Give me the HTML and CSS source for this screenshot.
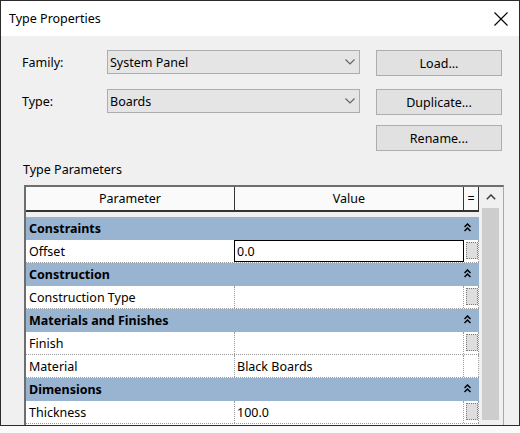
FILE: index.html
```html
<!DOCTYPE html>
<html>
<head>
<meta charset="utf-8">
<link rel="stylesheet" href="styles.css">
</head>
<body>
<div class="dialog">
  <div class="titlebar">
    <span class="title">Type Properties</span>
    <svg class="close" width="14" height="14" viewBox="0 0 14 14"><path d="M0.5 0.5 L13.5 13.5 M13.5 0.5 L0.5 13.5" stroke="#000" stroke-width="1.1" fill="none"/></svg>
  </div>
  <div class="body">
    <div class="top">
      <div class="fields">
        <div class="label">Family:</div>
        <div class="combo"><span>System Panel</span><svg class="chev" width="10" height="6" viewBox="0 0 10 6"><path d="M0.5 0.5 L5 5 L9.5 0.5" stroke="#606060" stroke-width="1.1" fill="none"/></svg></div>
        <div class="label">Type:</div>
        <div class="combo"><span>Boards</span><svg class="chev" width="10" height="6" viewBox="0 0 10 6"><path d="M0.5 0.5 L5 5 L9.5 0.5" stroke="#606060" stroke-width="1.1" fill="none"/></svg></div>
      </div>
      <div class="buttons">
        <div class="btn">Load...</div>
        <div class="btn btn-dup">Duplicate...</div>
        <div class="btn btn-ren">Rename...</div>
      </div>
    </div>
    <div class="section-label">Type Parameters</div>
    <div class="grid">
      <div class="table">
        <div class="hdr">
          <div class="c1">Parameter</div>
          <div class="c2">Value</div>
          <div class="c3">=</div>
        </div>
        <div class="gap"></div>
        <div class="band"><span>Constraints</span><svg class="dchev" width="7" height="9" viewBox="0 0 7 9"><path d="M0.5 4 L3.5 1 L6.5 4 M0.5 8 L3.5 5 L6.5 8" stroke="#000" stroke-width="1.5" fill="none"/></svg></div>
        <div class="row"><div class="name">Offset</div><div class="val edit">0.0</div><div class="eq"><div class="eqbtn"></div></div></div>
        <div class="band"><span>Construction</span><svg class="dchev" width="7" height="9" viewBox="0 0 7 9"><path d="M0.5 4 L3.5 1 L6.5 4 M0.5 8 L3.5 5 L6.5 8" stroke="#000" stroke-width="1.5" fill="none"/></svg></div>
        <div class="row"><div class="name">Construction Type</div><div class="val"></div><div class="eq"><div class="eqbtn"></div></div></div>
        <div class="band"><span>Materials and Finishes</span><svg class="dchev" width="7" height="9" viewBox="0 0 7 9"><path d="M0.5 4 L3.5 1 L6.5 4 M0.5 8 L3.5 5 L6.5 8" stroke="#000" stroke-width="1.5" fill="none"/></svg></div>
        <div class="row"><div class="name">Finish</div><div class="val"></div><div class="eq"><div class="eqbtn"></div></div></div>
        <div class="row"><div class="name">Material</div><div class="val">Black Boards</div><div class="eq"></div></div>
        <div class="band"><span>Dimensions</span><svg class="dchev" width="7" height="9" viewBox="0 0 7 9"><path d="M0.5 4 L3.5 1 L6.5 4 M0.5 8 L3.5 5 L6.5 8" stroke="#000" stroke-width="1.5" fill="none"/></svg></div>
        <div class="row"><div class="name">Thickness</div><div class="val">100.0</div><div class="eq"><div class="eqbtn"></div></div></div>
      </div>
      <div class="sb">
        <div class="sb-arrow"><svg width="10" height="6" viewBox="0 0 10 6"><path d="M0.8 5.2 L5 1 L9.2 5.2" stroke="#444" stroke-width="1.6" fill="none"/></svg></div>
        <div class="sb-thumb"></div>
      </div>
    </div>
  </div>
</div>
</body>
</html>
```
FILE: styles.css
```css
* { box-sizing: border-box; }
body {
  margin: 0;
  background: #fafafa;
  font-family: "Noto Sans", "Open Sans", sans-serif;
  font-size: 12.5px;
  color: #000;
}
.dialog {
  width: 520px;
  height: 426px;
  border: 1px solid #2b2b2b;
  background: #f0f0f0;
  display: flex;
  flex-direction: column;
  overflow: hidden;
}
.titlebar {
  height: 35px;
  flex-shrink: 0;
  background: #fff;
  display: flex;
  align-items: center;
  justify-content: space-between;
  padding: 0 11px 0 8px;
}
.close { display: block; }
.body {
  flex: 1;
  min-height: 0;
  padding-top: 14px;
  display: flex;
  flex-direction: column;
  overflow: hidden;
}
.top { display: flex; flex-shrink: 0; }
.fields {
  margin-left: 21px;
  display: grid;
  grid-template-columns: 85px 253px;
  grid-auto-rows: 24px;
  row-gap: 15px;
  align-content: start;
}
.label { display: flex; align-items: center; }
.combo {
  background: #e5e5e5;
  border: 1px solid #adadad;
  display: flex;
  align-items: center;
  justify-content: space-between;
  padding: 0 4px 0 2px;
}
.chev { display: block; }
.buttons {
  margin-left: 16px;
  display: flex;
  flex-direction: column;
}
.btn {
  width: 126px;
  height: 26px;
  background: #e1e1e1;
  border: 1px solid #adadad;
  display: flex;
  align-items: center;
  justify-content: center;
}
.btn-dup { margin-top: 13px; }
.btn-ren { margin-top: 10px; }
.section-label {
  margin: 11px 0 0 22px;
  line-height: 16px;
  flex-shrink: 0;
}
.grid {
  margin: 7px 0 0 23px;
  width: 480px;
  flex: 1;
  display: flex;
  border-top: 2px solid #6e6e6e;
  border-left: 2px solid #6e6e6e;
  border-right: 1px solid #a8a8a8;
}
.table { width: 453px; background: #fff; }
.hdr {
  display: flex;
  height: 25px;
  border-bottom: 2px solid #333;
  background: #fafafa;
}
.hdr > div {
  display: flex;
  align-items: center;
  justify-content: center;
  border-right: 1px solid #333;
}
.hdr .c1 { width: 209px; }
.hdr .c2 { width: 229px; }
.hdr .c3 { width: 15px; }
.gap { height: 5px; background: #f0f0f0; }
.band {
  height: 23px;
  background: #99b4d1;
  display: flex;
  align-items: center;
  justify-content: space-between;
  padding: 0 8px 0 3px;
  font-weight: bold;
}
.dchev { display: block; margin-top: -3px; }
.row {
  height: 23px;
  display: flex;
  border-bottom: 1px dotted #9a9a9a;
  background: #fff;
}
.row > div { height: 22px; }
.name {
  width: 209px;
  padding-left: 3px;
  border-right: 1px dotted #9a9a9a;
  display: flex;
  align-items: center;
}
.val {
  width: 229px;
  padding-left: 2px;
  border-right: 1px dotted #9a9a9a;
  display: flex;
  align-items: center;
}
.val.edit {
  border: 1px solid #000;
  margin-left: -1px;
  width: 230px;
}
.eq {
  width: 15px;
  border-right: 1px dotted #9a9a9a;
  padding: 2px 0 0 2px;
}
.eqbtn {
  width: 12px;
  height: 17px;
  background: #dedede;
  border: 1px dotted #7a7a7a;
}
.sb {
  width: 24px;
  background: #f0f0f0;
  padding-left: 3px;
  display: flex;
  flex-direction: column;
}
.sb-arrow {
  width: 17px;
  height: 21px;
  display: flex;
  align-items: center;
  justify-content: center;
}
.sb-arrow svg { display: block; margin-top: -2px; }
.sb-thumb {
  width: 17px;
  height: 212px;
  background: #cdcdcd;
}
```
